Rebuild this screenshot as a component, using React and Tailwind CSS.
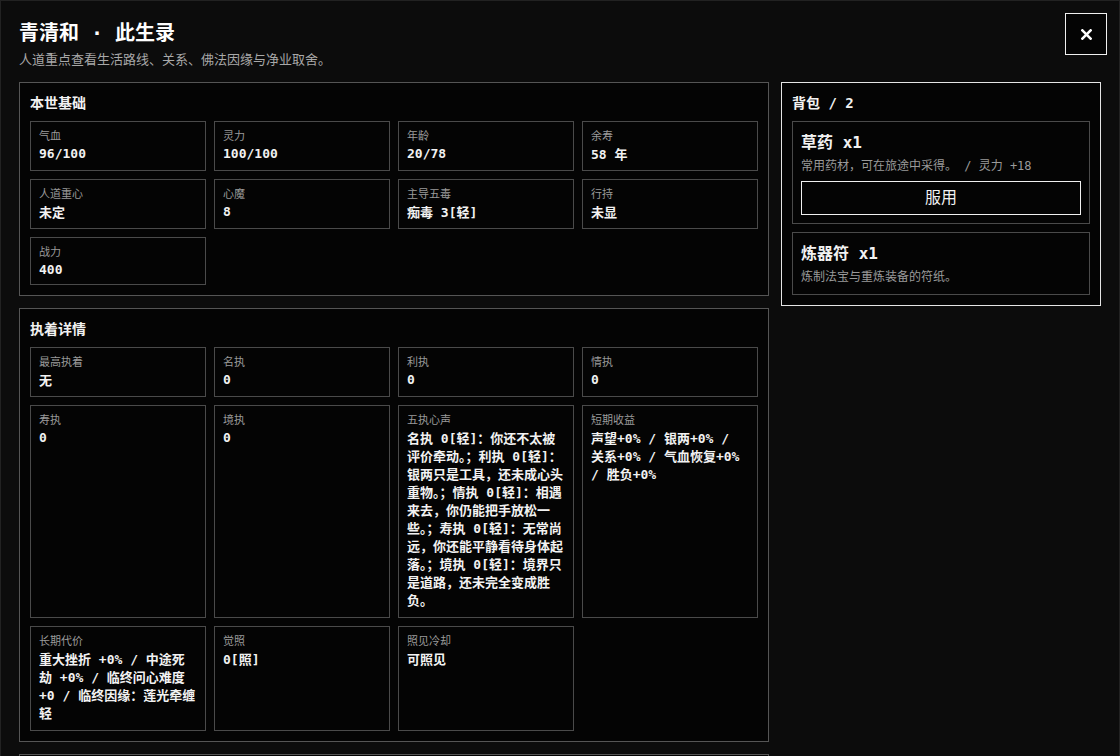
import React from "react";

const basics = [
  ["气血", "96/100"],
  ["灵力", "100/100"],
  ["年龄", "20/78"],
  ["余寿", "58 年"],
  ["人道重心", "未定"],
  ["心魔", "8"],
  ["主导五毒", "痴毒 3[轻]"],
  ["行持", "未显"],
  ["战力", "400"],
];

const attach = [
  ["最高执着", "无"],
  ["名执", "0"],
  ["利执", "0"],
  ["情执", "0"],
  ["寿执", "0"],
  ["境执", "0"],
  [
    "五执心声",
    "名执 0[轻]：你还不太被评价牵动。；利执 0[轻]：银两只是工具，还未成心头重物。；情执 0[轻]：相遇来去，你仍能把手放松一些。；寿执 0[轻]：无常尚远，你还能平静看待身体起落。；境执 0[轻]：境界只是道路，还未完全变成胜负。",
  ],
  ["短期收益", "声望+0% / 银两+0% / 关系+0% / 气血恢复+0% / 胜负+0%"],
  ["长期代价", "重大挫折 +0% / 中途死劫 +0% / 临终问心难度 +0 / 临终因缘：莲光牵缠轻"],
  ["觉照", "0[照]"],
  ["照见冷却", "可照见"],
];

const relations = [
  ["师门", "未入"],
  ["道侣", "无"],
  ["知交", "0"],
  ["宿怨", "0"],
];

function Card({ label, value }) {
  const ascii = /^[\x00-\x7f]*$/.test(value);
  const long = value.length > 14;
  return (
    <div
      className={
        "border border-[#4a4a4a] bg-[#040404] pl-2 pr-2 pt-[7px] " +
        (long ? "pb-[7px]" : "pb-[6px]")
      }
    >
      <div className="text-[11px] leading-[16px] text-[#9a9a9a]">{label}</div>
      <div
        className={
          "mt-[1px] text-[13px] font-bold text-[#f2f2f2] break-words " +
          (ascii ? "leading-[16px]" : "leading-[18px]")
        }
      >
        {value}
      </div>
    </div>
  );
}

function Section({ title, items }) {
  return (
    <section className="border border-[#555555] bg-[#040404] p-[10px]">
      <h2 className="mb-2 text-[14px] font-bold leading-5 text-[#f2f2f2]">{title}</h2>
      <div className="grid grid-cols-4 gap-2">
        {items.map(([l, v]) => (
          <Card key={l} label={l} value={v} />
        ))}
      </div>
    </section>
  );
}

function Item({ name, desc, action }) {
  return (
    <div className="border border-[#4a4a4a] bg-[#040404] px-2 pt-[10px] pb-2">
      <div className="text-[16px] font-bold leading-[22px] text-[#f2f2f2]">{name}</div>
      <div className="mt-[3px] text-[12px] leading-[18px] text-[#9a9a9a]">{desc}</div>
      {action && (
        <button className="mt-[6px] flex h-[34px] w-full items-center justify-center border border-[#f0f0f0] bg-[#040404] text-[16px] text-[#f2f2f2]">
          {action}
        </button>
      )}
    </div>
  );
}

export default function App() {
  return (
    <div className="relative h-screen overflow-hidden border-x border-t border-[#222222] bg-[#0c0c0c] pl-[18px] pr-[18px] pt-[18px] font-['DejaVu_Sans_Mono','Noto_Sans_CJK_SC',monospace] text-[#f2f2f2] [text-spacing-trim:normal]">
      <header>
        <h1 className="text-[20px] font-bold leading-[28px] text-white">青清和 · 此生录</h1>
        <p className="mt-[3px] text-[13px] leading-5 text-[#a8a8a8]">
          人道重点查看生活路线、关系、佛法因缘与净业取舍。
        </p>
      </header>
      <button className="absolute right-[12px] top-[12px] flex h-[42px] w-[42px] items-center justify-center border border-[#f0f0f0] bg-[#040404] text-white">
        <svg width="11" height="11" viewBox="0 0 12 12" fill="none" stroke="currentColor" strokeWidth="2.8" strokeLinecap="square">
          <line x1="1.5" y1="1.5" x2="10.5" y2="10.5" />
          <line x1="10.5" y1="1.5" x2="1.5" y2="10.5" />
        </svg>
      </button>
      <div className="mt-[12px] grid grid-cols-[750px_320px] items-start gap-[12px]">
        <div className="flex flex-col gap-[12px]">
          <Section title="本世基础" items={basics} />
          <Section title="执着详情" items={attach} />
          <Section title="因缘关系" items={relations} />
        </div>
        <aside className="border border-[#e5e5e5] bg-[#040404] p-[10px]">
          <h2 className="mb-2 text-[14px] font-bold leading-5 text-[#f2f2f2]">背包 / 2</h2>
          <div className="flex flex-col gap-2">
            <Item name="草药 x1" desc="常用药材，可在旅途中采得。 / 灵力 +18" action="服用" />
            <Item name="炼器符 x1" desc="炼制法宝与重炼装备的符纸。" />
          </div>
        </aside>
      </div>
    </div>
  );
}
